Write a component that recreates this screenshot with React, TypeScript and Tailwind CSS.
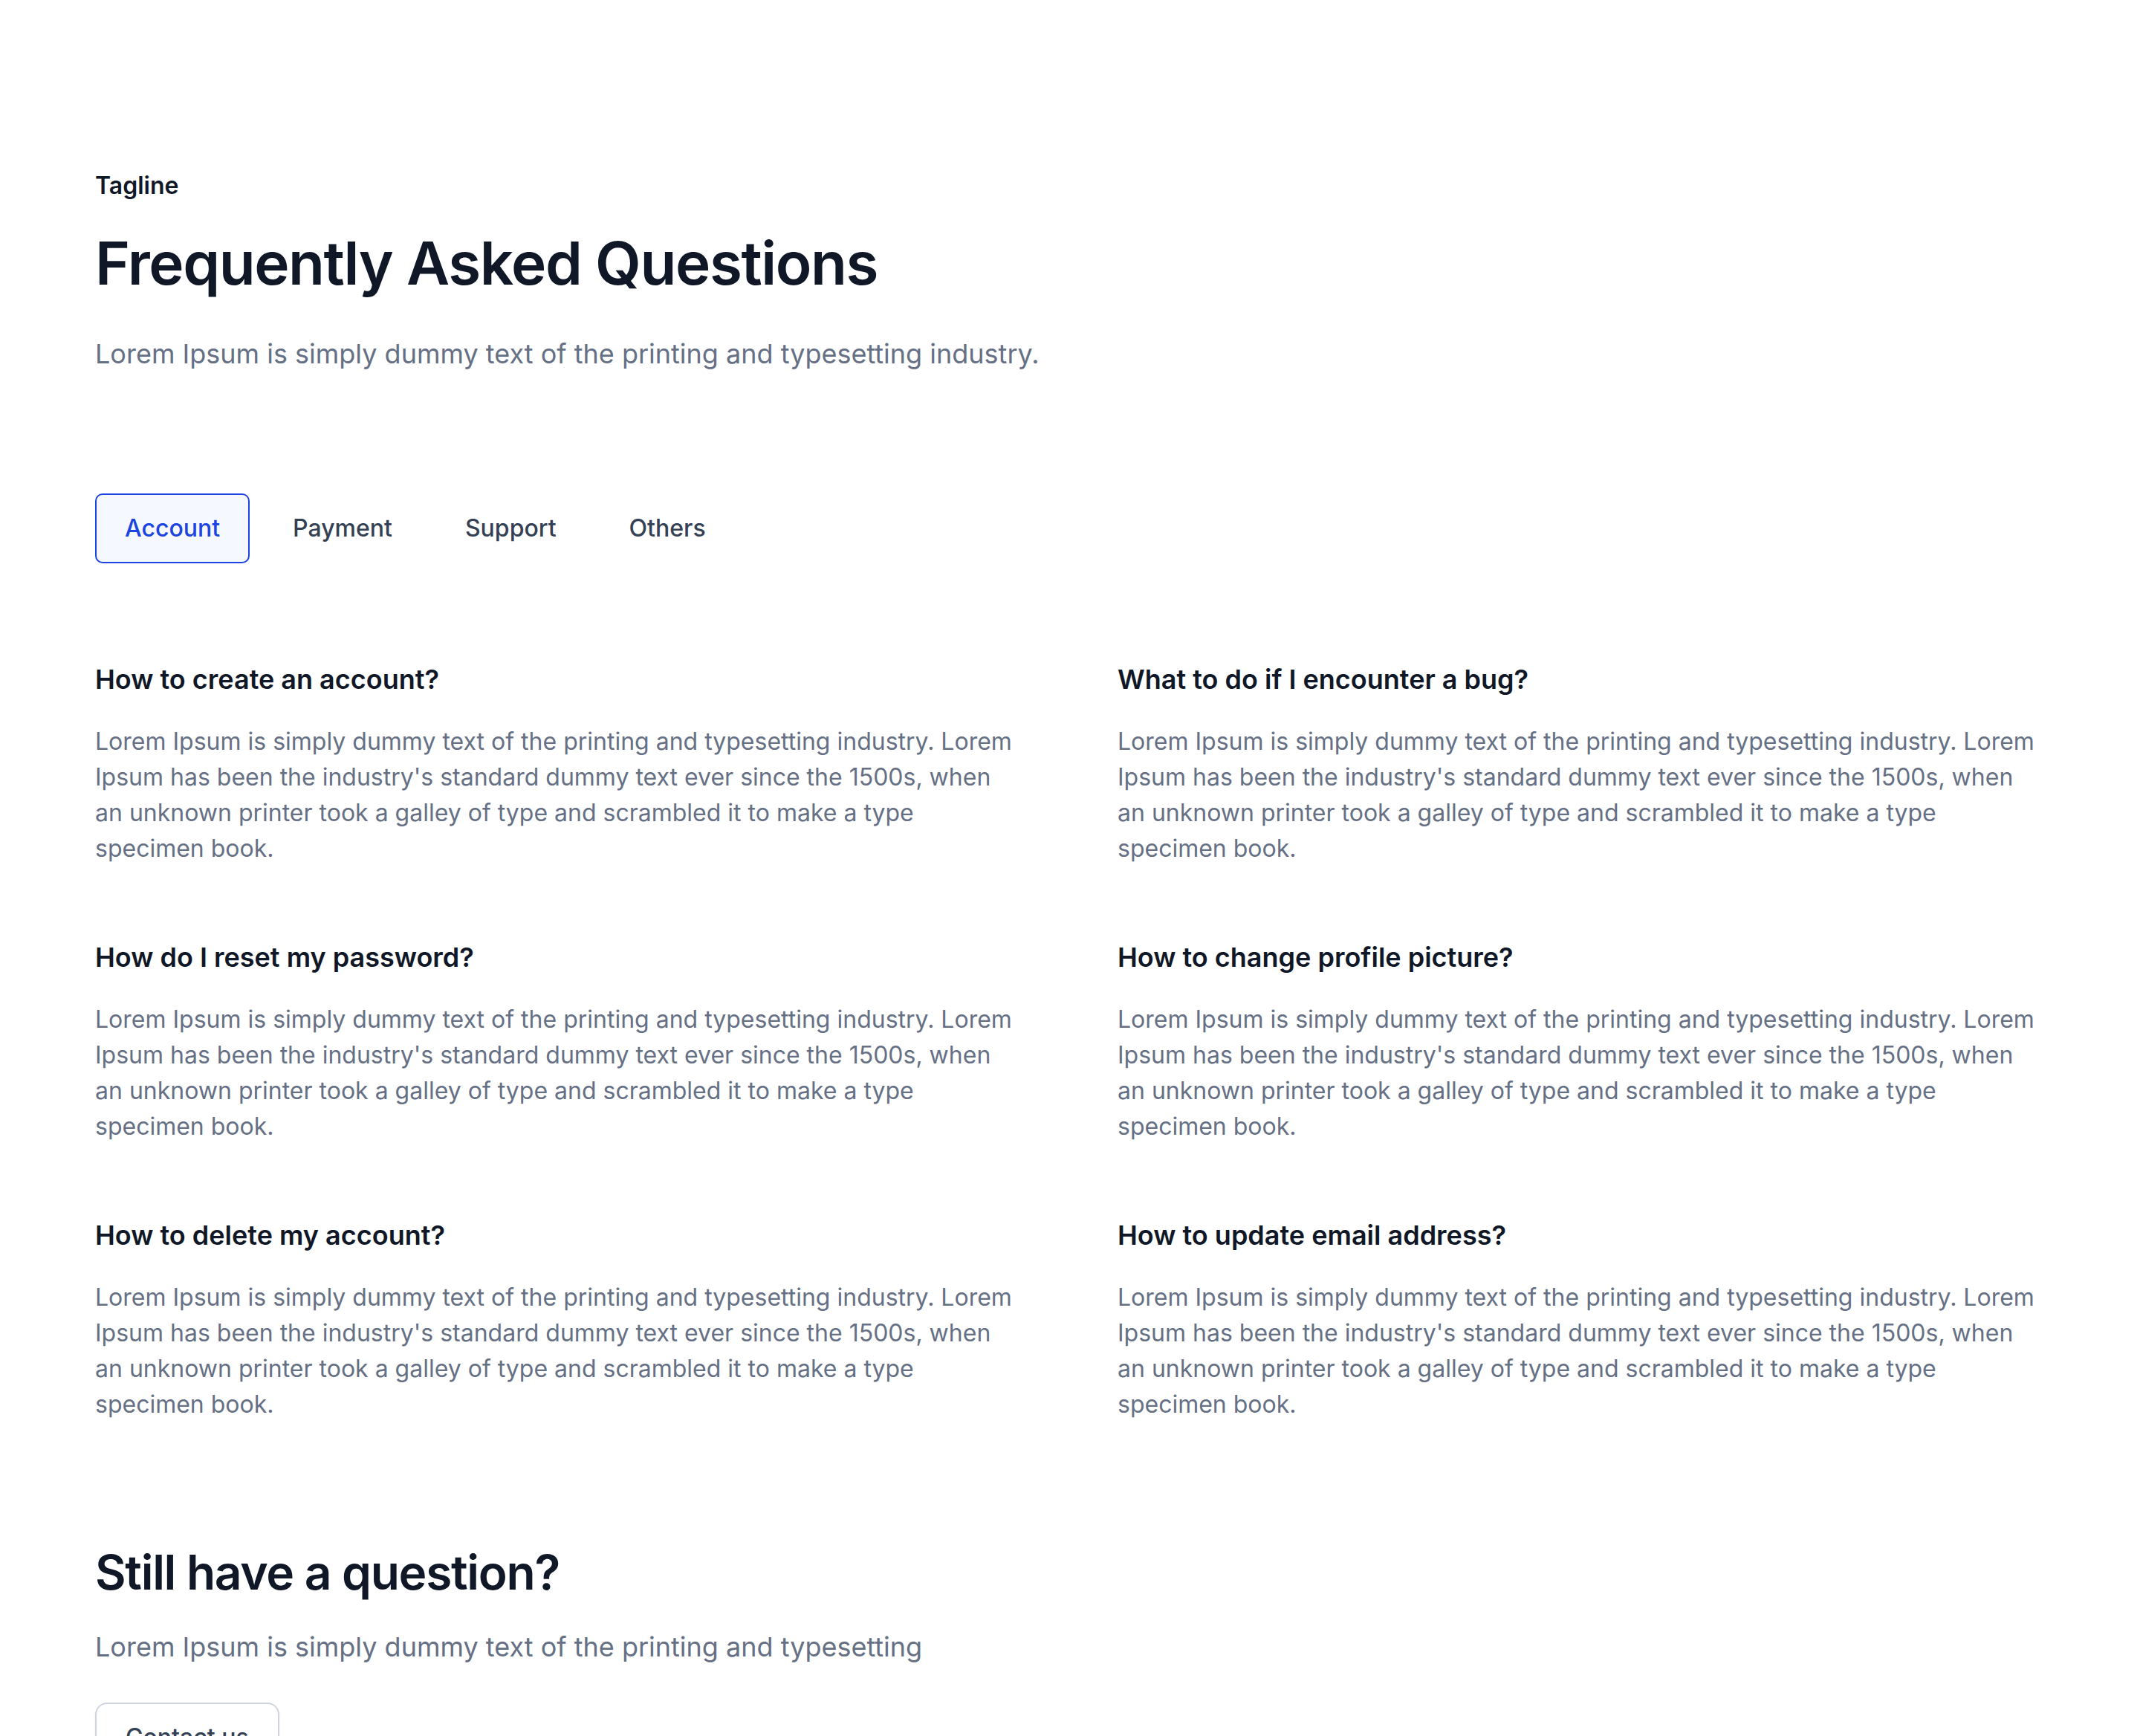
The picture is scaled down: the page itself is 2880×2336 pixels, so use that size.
const faqs = [
  { q: "How to create an account?" },
  { q: "What to do if I encounter a bug?" },
  { q: "How do I reset my password?" },
  { q: "How to change profile picture?" },
  { q: "How to delete my account?" },
  { q: "How to update email address?" },
];

const answer =
  "Lorem Ipsum is simply dummy text of the printing and typesetting industry. Lorem Ipsum has been the industry's standard dummy text ever since the 1500s, when an unknown printer took a galley of type and scrambled it to make a type specimen book.";

const tabs = ["Account", "Payment", "Support", "Others"];

export default function App() {
  return (
    <div className="min-h-screen w-full bg-white font-['Inter',sans-serif]">
      <div className="px-[128px] pt-[226px] pb-[160px]">
        {/* header */}
        <p className="text-[32px] leading-[48px] font-semibold text-[#101828]">Tagline</p>
        <h1 className="mt-[30px] text-[80px] leading-[100px] font-semibold tracking-[-0.018em] text-[#101828]">
          Frequently Asked Questions
        </h1>
        <p className="mt-[44px] text-[36px] leading-[56px] text-[#667085]">
          Lorem Ipsum is simply dummy text of the printing and typesetting industry.
        </p>

        {/* tabs */}
        <div className="mt-[160px] flex items-center gap-[18px]">
          {tabs.map((t, i) => (
            <button
              key={t}
              className={
                i === 0
                  ? "rounded-[10px] border-2 border-[#1b44e0] bg-[#f5f8ff] px-[38px] py-[21px] text-[32px] leading-[48px] font-medium text-[#1b44e0]"
                  : "rounded-[10px] border-2 border-transparent px-[38px] py-[21px] text-[32px] leading-[48px] font-medium text-[#344054]"
              }
            >
              {t}
            </button>
          ))}
        </div>

        {/* questions */}
        <div className="mt-[128px] grid grid-cols-2 gap-x-[128px] gap-y-[94px]">
          {faqs.map((f) => (
            <div key={f.q}>
              <h3 className="text-[36px] leading-[56px] font-semibold text-[#101828]">{f.q}</h3>
              <p className="mt-[32px] text-[32px] leading-[48px] text-[#667085]">{answer}</p>
            </div>
          ))}
        </div>

        {/* contact */}
        <h2 className="mt-[162px] text-[64px] leading-[80px] font-semibold tracking-[-0.02em] text-[#101828]">
          Still have a question?
        </h2>
        <p className="mt-[32px] text-[36px] leading-[56px] text-[#667085]">
          Lorem Ipsum is simply dummy text of the printing and typesetting
        </p>
        <button className="mt-[47px] rounded-[16px] border-2 border-[#d0d5dd] bg-white px-[39px] py-[21px] text-[32px] leading-[48px] font-medium text-[#344054] shadow-[0_2px_4px_rgba(16,24,40,0.05)]">
          Contact us
        </button>
      </div>
    </div>
  );
}
